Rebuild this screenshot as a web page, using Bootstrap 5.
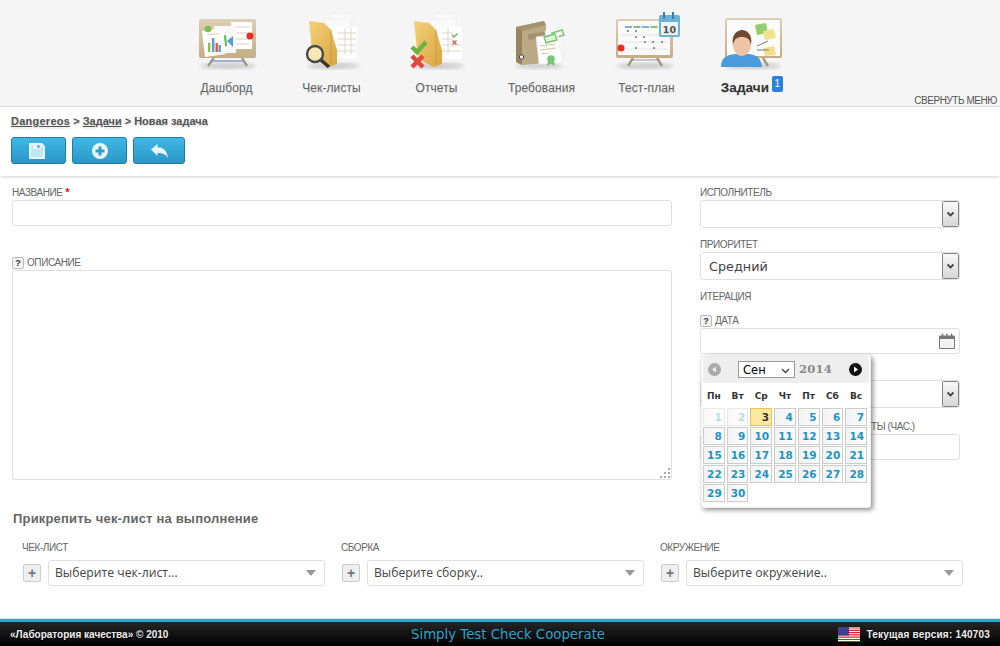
<!DOCTYPE html>
<html lang="ru">
<head>
<meta charset="utf-8">
<title>Новая задача</title>
<link rel="stylesheet" href="https://cdn.jsdelivr.net/npm/bootstrap@5.3.0/dist/css/bootstrap.min.css">
<style>
html,body{height:646px;overflow:hidden}
body{font-family:"Liberation Sans",Arial,sans-serif;font-size:11px;color:#555;background:#fff}
.page-shell{height:646px}
.top-menu{height:107px;background:#f5f5f5;border-bottom:1px solid #e2e2e2;padding-left:174px}
.menu-entry{width:105px;height:106px;text-decoration:none;color:#666;font-size:12px;letter-spacing:.1px;text-shadow:0 1px 1px rgba(0,0,0,.12)}
.menu-entry svg{display:block;width:80px;height:80px}
.menu-caption{margin-top:1px;line-height:14px;white-space:nowrap}
.menu-entry.on{color:#333;font-weight:700;font-size:13.5px}
.menu-entry.on .menu-caption{padding-right:13px}
.count-pill{position:absolute;left:51px;top:-5px;width:11px;height:16px;background:#2a7fe0;color:#fff;border-radius:2px;font-size:10px;font-weight:400;line-height:16px;text-align:center;text-shadow:none}
.collapse-link{position:absolute;right:3px;bottom:-1px;font-size:10px;letter-spacing:-.45px;line-height:12px;color:#555;text-decoration:none}
.sub-head{height:69px;padding:7px 11px 0;box-shadow:0 1px 3px rgba(0,0,0,.18);position:relative}
.crumbs{font-size:11px;font-weight:700;line-height:14px;color:#555;text-shadow:0 1px 2px rgba(0,0,0,.2)}
.crumbs a{color:#555}
.crumbs a.wide-link{letter-spacing:.25px}
.tool-row{margin-top:9px;gap:6px}
.tool-btn{height:27px;width:55px;padding:0;background:linear-gradient(#3fb8e6,#2997c6);border:1px solid #1e7da3;border-radius:3px}
.tool-btn.narrow{width:52px}
.tool-btn:hover{background:linear-gradient(#3fb8e6,#2997c6);border-color:#1e7da3}
.tool-btn svg{display:block;margin:auto}
.tool-btn svg.floppy-glyph{margin-left:17px}
.form-area{padding:10px 0 0 12px}
.col-left{width:660px}
.col-right{width:260px;margin-left:28px}
.fld-label{display:flex;align-items:center;font-size:10px;letter-spacing:-.42px;line-height:14px;color:#666;text-transform:uppercase;margin-bottom:0;white-space:nowrap}
.req-mark{color:#e00;margin-left:3px;font-weight:700}
.help-mark{width:12px;height:12px;border:1px solid #bbb;border-radius:2px;background:#f3f3f3;color:#333;font-size:9px;font-weight:700;line-height:10px;text-align:center;margin-right:3px;flex:none;letter-spacing:0}
.txt-field{display:block;width:100%;height:26px;border:1px solid #e0e0e0;border-radius:3px;background:#fff;padding:0 8px;outline:0}
.txt-area{height:210px;border-radius:2px;resize:none}
.grip-box{position:relative}
.grip-box svg{position:absolute;right:1px;bottom:1px}
.gap-30{margin-top:30px}
.gap-10{margin-top:10px}
.gap-12{margin-top:12px}
.label-tail{padding-left:171px}
.native-box{display:block;width:100%;height:28px;border:1px solid #e0e0e0;border-radius:3px;padding:2px 18px 0 8px;font-family:"DejaVu Sans",sans-serif;font-size:12.8px;color:#444;appearance:none;outline:0;background:#fff url("data:image/svg+xml,%3Csvg xmlns='http://www.w3.org/2000/svg' width='17' height='26'%3E%3ClinearGradient id='g' x2='0' y2='1'%3E%3Cstop stop-color='%23fafafa'/%3E%3Cstop offset='1' stop-color='%23d6d6d6'/%3E%3C/linearGradient%3E%3Crect x='.5' y='.5' width='16' height='25' rx='1' fill='url(%23g)' stroke='%23858585'/%3E%3Cpath d='M5.5 11.5l3 3 3-3' fill='none' stroke='%23444' stroke-width='1.8'/%3E%3C/svg%3E") no-repeat right 0 center}
.date-box{position:relative}
.date-box .txt-field{padding-right:26px}
.cal-glyph{position:absolute;right:5px;top:5px}
.cal-pop{position:absolute;left:1px;top:27px;width:170px;height:153px;background:#fff;border-radius:3px;box-shadow:2px 2px 5px rgba(0,0,0,.45);z-index:5;padding:0 1px 1px;border:1px solid #eee}
.cal-head{height:27px;background:#eee;border-radius:3px;padding:0 7px 0 5px;justify-content:space-between}
.cal-nav{width:13px;height:13px;border-radius:50%;position:relative;flex:none}
.cal-nav.prev{background:#aaa}
.cal-nav.next{background:#111}
.cal-nav svg{position:absolute;left:0;top:0}
.cal-mid{gap:4px}
.cal-month{width:57px;height:17px;border:1px solid #999;background:#fff url("data:image/svg+xml,%3Csvg xmlns='http://www.w3.org/2000/svg' width='9' height='6'%3E%3Cpath d='M1 1l3.5 3.5L8 1' fill='none' stroke='%23444' stroke-width='1.4'/%3E%3C/svg%3E") no-repeat right 4px bottom 3px;appearance:none;font-family:"DejaVu Sans",sans-serif;font-size:11.5px;padding:1px 0 0 4px;color:#000;border-radius:0;outline:0;line-height:14px}
.cal-year{font-family:"DejaVu Serif",serif;font-weight:700;font-size:11.5px;color:#888;letter-spacing:.2px}
.cal-grid{border-collapse:separate;border-spacing:2px 1.4px;margin:6px 0 0 -2px;font-family:"DejaVu Sans",sans-serif;font-weight:700;font-size:10.5px;table-layout:fixed;width:168px}
.cal-grid th{font-size:9px;color:#333;text-align:center;height:17px;padding:0 0 3px;font-weight:700}
.cal-grid td{height:18px;border:1px solid #ccc;text-align:right;padding:0 2px;color:#1c94c4;line-height:14px;background:linear-gradient(100deg,#f2f2f2,#fdfdfd)}
.cal-grid td.muted{color:#b5dcec;border-color:#e8e8e8;background:linear-gradient(100deg,#f8f8f8,#fff)}
.cal-grid td.today{background:#fde89f;border-color:#f0c14b;color:#333}
.cal-grid td.blank{border:0;background:none}
.attach-title{font-size:13px;font-weight:700;line-height:16px;color:#666;margin:31px 0 0 13px;letter-spacing:.18px}
.attach-row{margin:14px 0 0 23px}
.attach-col{width:319px}
.attach-col .fld-label{margin:0 0 5px -1px}
.attach-line{gap:7px}
.plus-btn{width:18px;height:18px;padding:0;border:1px solid #ccc;border-radius:2px;background:#efefef;color:#777;font-size:14px;font-weight:700;line-height:14px;flex:none}
.pick-box{width:277px;height:26px;flex:none;border:1px solid #e0e0e0;border-radius:3px;padding:1px 22px 0 6px;font-family:"Open Sans",sans-serif;font-size:12.2px;color:#444;appearance:none;outline:0;background:#fff url("data:image/svg+xml,%3Csvg xmlns='http://www.w3.org/2000/svg' width='10' height='6'%3E%3Cpath d='M0 0h10L5 6z' fill='%23999'/%3E%3C/svg%3E") no-repeat right 8px center}
.foot-bar{margin-top:auto;height:27px;border-top:3px solid #2ea6d0;outline:1px solid #ddd;background:linear-gradient(#262626,#000);color:#eee;font-size:10px;font-weight:700;padding:1px 10px 0;position:relative;text-shadow:0 1px 1px #000}
.foot-mid{position:absolute;left:411px;top:4px;font-family:"DejaVu Sans",sans-serif;font-size:13.3px;font-weight:400;color:#2ea6d0;line-height:18px;white-space:nowrap}
.foot-right{gap:6px;letter-spacing:.2px}
.flag-svg{display:block}
</style>
</head>
<body>
<div class="page-shell d-flex flex-column">

<nav class="top-menu d-flex position-relative">
  <a class="menu-entry d-flex flex-column align-items-center" href="#">
    <svg viewBox="187 0 80 80">
      <defs>
        <linearGradient id="tan" x2="0" y2="1"><stop stop-color="#dccfb4"/><stop offset="1" stop-color="#c4ad85"/></linearGradient>
        <linearGradient id="gold" x1="0" x2="1" y1="0" y2="1"><stop stop-color="#f4d27a"/><stop offset="1" stop-color="#d9a440"/></linearGradient>
        <filter id="soft"><feGaussianBlur stdDeviation="2"/></filter>
      </defs>
      <ellipse cx="228" cy="66" rx="28" ry="3" fill="#000" opacity=".18" filter="url(#soft)"/>
      <path d="M214 58l-6 8M242 58l5 8" stroke="#a8987a" stroke-width="2.400"/>
      <path d="M210 61h35" stroke="#7f9cb8" stroke-width="1.500"/>
      <rect x="199" y="19" width="57" height="39" rx="2" fill="url(#tan)"/>
      <rect x="231" y="22" width="21" height="27" fill="#fff"/>
      <path d="M235 27h14M235 33h14M235 39h14M235 44h14" stroke="#d8cdb6"/>
      <rect x="214" y="26" width="22" height="27" fill="#f8f8f8"/>
      <path d="M222 36l4-1 1 11-5 1z" fill="#5cb85c"/><path d="M227 41l6-5v11z" fill="#4a9fdc"/>
      <path d="M202 31l21-3 3 26-21 3z" fill="#fff"/>
      <path d="M207 35l12-1.500" stroke="#d8cdb6"/>
      <rect x="208" y="43" width="2.400" height="9" fill="#8bc34a"/><rect x="212" y="38" width="2.400" height="14" fill="#5e9bd0"/><rect x="215.500" y="43" width="2.400" height="9" fill="#e0584a"/><rect x="218.500" y="45" width="2.400" height="7" fill="#5e9bd0"/>
      <circle cx="208" cy="29" r="3.300" fill="#79bf4a"/>
      <circle cx="250" cy="36" r="3.500" fill="#ee2a24"/>
    </svg>
    <span class="menu-caption">Дашборд</span>
  </a>
  <a class="menu-entry d-flex flex-column align-items-center" href="#">
    <svg viewBox="292 0 80 80">
      <ellipse cx="333" cy="66" rx="26" ry="3" fill="#000" opacity=".18" filter="url(#soft)"/>
      <rect x="331" y="13" width="21" height="20" fill="#f9f9f9" stroke="#eee" stroke-width=".5"/>
      <path d="M347 19v6" stroke="#999"/>
      <rect x="325" y="19" width="26" height="40" fill="#fafafa" stroke="#e8e8e8" stroke-width=".5"/>
      <rect x="331" y="27" width="26" height="32" fill="#fff"/>
      <path d="M337 33h19M337 39h19M337 45h19M337 51h19M345 28v26M351 28v26" stroke="#d8cdb6" stroke-width=".8"/>
      <path d="M309 21l15 2 7 7 6 20v14l-8 3-16-8z" fill="url(#gold)"/>
      <path d="M331 30v34" stroke="#b68b34" opacity=".6"/>
      <path d="M321 60l8 7" stroke="#333" stroke-width="3.500"/>
      <circle cx="315" cy="54" r="8" fill="#f6e7b4" stroke="#4a4a4a" stroke-width="2.400"/>
    </svg>
    <span class="menu-caption">Чек-листы</span>
  </a>
  <a class="menu-entry d-flex flex-column align-items-center" href="#">
    <svg viewBox="396 0 80 80">
      <ellipse cx="437" cy="66" rx="26" ry="3" fill="#000" opacity=".18" filter="url(#soft)"/>
      <rect x="434" y="13" width="21" height="20" fill="#f9f9f9" stroke="#eee" stroke-width=".5"/>
      <path d="M450 19v6" stroke="#999"/>
      <rect x="429" y="19" width="26" height="40" fill="#fafafa" stroke="#e8e8e8" stroke-width=".5"/>
      <rect x="435" y="27" width="26" height="32" fill="#fff"/>
      <path d="M441 33h11M441 39h11M441 45h19M441 51h19M447 28v26" stroke="#d8cdb6" stroke-width=".8"/>
      <path d="M451 35l2 2 3.500-3.500" fill="none" stroke="#6ab04c" stroke-width="1.300"/>
      <path d="M451.500 40.500l4 4m0-4l-4 4" stroke="#d9534f" stroke-width="1.200"/>
      <path d="M413 21l15 2 7 7 6 20v14l-8 3-16-8z" fill="url(#gold)"/>
      <path d="M435 30v34" stroke="#b68b34" opacity=".6"/>
      <path d="M411 47l5 5 9-10" fill="none" stroke="#6cb33f" stroke-width="4.500"/>
      <path d="M411 56l11 11m0-11l-11 11" stroke="#e0483e" stroke-width="4.500"/>
    </svg>
    <span class="menu-caption">Отчеты</span>
  </a>
  <a class="menu-entry d-flex flex-column align-items-center" href="#">
    <svg viewBox="501 0 80 80">
      <ellipse cx="538" cy="66" rx="24" ry="3" fill="#000" opacity=".16" filter="url(#soft)"/>
      <path d="M515 27l28-6 2 4v38l-24 2-6-3z" fill="#bba986"/>
      <path d="M515 27l28-6 2 4-24 6z" fill="#a5926f"/>
      <path d="M515 27l6 4v34l-6-3z" fill="#97845f"/>
      <rect x="527" y="33" width="17" height="6" fill="#a5926f" transform="rotate(-8 535 36)"/>
      <circle cx="520.500" cy="57" r="2.200" fill="#f3f3f3" stroke="#444"/>
      <path d="M544 31l17-4 2 29-16 3z" fill="#f6f6f6" stroke="#e4e4e4" stroke-width=".5"/>
      <path d="M551 33l10-3 2 5-10 3z" fill="none" stroke="#7cc47c" stroke-width="1.500"/>
      <path d="M535 37l22-3 4 29-23 1z" fill="#fff" stroke="#e4e4e4" stroke-width=".5"/>
      <path d="M543 37l11-3 2 6-11 3z" fill="#dff0d8" stroke="#6ec06e" stroke-width="1.300"/>
      <path d="M539 46l15-2M539 50l16-2M540 54l8-1" stroke="#d6c498"/>
      <circle cx="550" cy="59" r="3.800" fill="#7cc47c"/><path d="M547 61l-1 5 4-2 4 2-1-5" fill="#7cc47c"/>
    </svg>
    <span class="menu-caption">Требования</span>
  </a>
  <a class="menu-entry d-flex flex-column align-items-center" href="#">
    <svg viewBox="607 0 80 80">
      <ellipse cx="645" cy="66" rx="28" ry="3" fill="#000" opacity=".18" filter="url(#soft)"/>
      <path d="M633 58l-5 8M657 58l5 8" stroke="#a8987a" stroke-width="2.400"/>
      <path d="M630 60h30" stroke="#999"/>
      <rect x="616" y="19" width="57" height="39" rx="2" fill="url(#tan)"/>
      <rect x="618" y="21" width="52" height="34" fill="#fafafa"/>
      <path d="M625 27h7M642 27h7" stroke="#7fb5d8" stroke-width="2"/><path d="M633.500 27h7M650.500 27h7" stroke="#7fc27f" stroke-width="2"/>
      <path d="M622 35h46M622 42h46M622 49h46" stroke="#ddd" stroke-width=".8"/>
      <g fill="#666"><circle cx="628" cy="31" r=".9"/><circle cx="636" cy="31" r=".9"/><circle cx="636" cy="37" r=".9"/><circle cx="644" cy="37" r=".9"/><circle cx="645" cy="42" r=".9"/><circle cx="653" cy="42" r=".9"/><circle cx="662" cy="42" r=".9"/><circle cx="636" cy="48" r=".9"/><circle cx="654" cy="48" r=".9"/></g>
      <circle cx="621" cy="48" r="3.500" fill="#ee2a24"/>
      <rect x="659" y="15" width="21" height="22" rx="2" fill="#6cb2d8"/>
      <rect x="661" y="22" width="17" height="13" fill="#eef3f6"/>
      <path d="M664 12v7M673 12v7" stroke="#3f7fa5" stroke-width="2"/>
      <text x="669.500" y="33" text-anchor="middle" font-family="DejaVu Sans" font-weight="700" font-size="9.500" fill="#555">10</text>
    </svg>
    <span class="menu-caption">Тест-план</span>
  </a>
  <a class="menu-entry on d-flex flex-column align-items-center" href="#">
    <svg viewBox="711 0 80 80">
      <ellipse cx="752" cy="66" rx="28" ry="3" fill="#000" opacity=".18" filter="url(#soft)"/>
      <path d="M762 58l5 8" stroke="#a8987a" stroke-width="2.400"/>
      <rect x="724" y="18" width="57" height="40" rx="2" fill="url(#tan)"/>
      <rect x="726" y="20" width="53" height="36" fill="#fbfbfb"/>
      <path d="M754 25l11-2 2 10-11 2z" fill="#8fcf6f"/>
      <path d="M762 31l11-2 2 9-11 2z" fill="#f3e08a"/>
      <path d="M762 48l11-2 2 9-11 1z" fill="#f3e08a"/>
      <path d="M767 41l-11 5M768 50l-12 0" stroke="#777" fill="none"/>
      <path d="M720 67c0-10 6-12 14-13h14c8 1 12 4 13 13z" fill="#4a9bdc"/>
      <ellipse cx="741" cy="45" rx="9" ry="11" fill="#eec4a4"/>
      <path d="M732 45c-2-10 4-15 9-15s11 5 9 15c-1-6-4-8-9-8s-8 2-9 8z" fill="#6f4a2c"/>
    </svg>
    <span class="menu-caption position-relative">Задачи<span class="count-pill">1</span></span>
  </a>
  <a class="collapse-link text-uppercase" href="#">Свернуть меню</a>
</nav>

<div class="sub-head">
  <div class="crumbs"><a class="wide-link" href="#">Dangereos</a> &gt; <a href="#">Задачи</a> &gt; Новая задача</div>
  <div class="tool-row d-flex">
    <button class="btn tool-btn" type="button" aria-label="Сохранить"><svg class="floppy-glyph" width="16" height="16" viewBox="0 0 16 16"><path d="M1 1h11.500L15 3.500V15H1z" fill="#bfe6f5" stroke="#e8f6fb" stroke-width="2"/><rect x="4" y="1" width="8" height="5" fill="#e8f6fb"/><rect x="8.500" y="2" width="2" height="3" fill="#35a9d6"/></svg></button>
    <button class="btn tool-btn" type="button" aria-label="Добавить"><svg width="16" height="16" viewBox="0 0 16 16"><circle cx="8" cy="8" r="8" fill="#e8f6fb"/><path d="M8 3.500v9M3.500 8h9" stroke="#2f9fcd" stroke-width="3"/></svg></button>
    <button class="btn tool-btn narrow" type="button" aria-label="Назад"><svg width="17" height="14" viewBox="0 0 17 14"><path d="M0 5.500L6.500 0v3.300C12 3.300 16 6.500 17 14c-2-3.500-5-5-10.500-5v3z" fill="#e8f6fb"/></svg></button>
  </div>
</div>

<main class="form-area">
  <div class="d-flex">
    <div class="col-left">
      <label class="fld-label">Название<span class="req-mark">*</span></label>
      <input class="txt-field" type="text">
      <label class="fld-label gap-30"><span class="help-mark">?</span>Описание</label>
      <div class="grip-box">
        <textarea class="txt-field txt-area"></textarea>
        <svg width="12" height="12" viewBox="0 0 12 12"><g fill="#aaa"><rect x="9" y="1" width="2" height="2"/><rect x="5" y="5" width="2" height="2"/><rect x="9" y="5" width="2" height="2"/><rect x="1" y="9" width="2" height="2"/><rect x="5" y="9" width="2" height="2"/><rect x="9" y="9" width="2" height="2"/></g></svg>
      </div>
    </div>
    <div class="col-right">
      <label class="fld-label">Исполнитель</label>
      <select class="native-box"><option></option></select>
      <label class="fld-label gap-10">Приоритет</label>
      <select class="native-box"><option>Средний</option></select>
      <label class="fld-label gap-10">Итерация</label>
      <label class="fld-label gap-10"><span class="help-mark">?</span>Дата</label>
      <div class="date-box">
        <input class="txt-field" type="text">
        <svg class="cal-glyph" width="16" height="16" viewBox="0 0 16 16"><path d="M0.500 3h15v12.500H.5z" fill="#f2f2f2" stroke="#777"/><rect x="0" y="3" width="16" height="3" fill="#777"/><path d="M3.500 0.500v4M8 .5v4M12.500 .5v4" stroke="#777" stroke-width="1.400"/></svg>
        <div class="cal-pop">
          <div class="cal-head d-flex align-items-center">
            <span class="cal-nav prev"><svg width="13" height="13" viewBox="0 0 13 13"><path d="M8 3.500v6L4 6.500z" fill="#eee"/></svg></span>
            <span class="cal-mid d-flex align-items-center">
              <select class="cal-month"><option>Сен</option></select>
              <span class="cal-year">2014</span>
            </span>
            <span class="cal-nav next"><svg width="13" height="13" viewBox="0 0 13 13"><path d="M5 3.500v6l4-3z" fill="#fff"/></svg></span>
          </div>
          <table class="cal-grid">
            <thead><tr><th>Пн</th><th>Вт</th><th>Ср</th><th>Чт</th><th>Пт</th><th>Сб</th><th>Вс</th></tr></thead>
            <tbody>
              <tr><td class="muted">1</td><td class="muted">2</td><td class="today">3</td><td>4</td><td>5</td><td>6</td><td>7</td></tr>
              <tr><td>8</td><td>9</td><td>10</td><td>11</td><td>12</td><td>13</td><td>14</td></tr>
              <tr><td>15</td><td>16</td><td>17</td><td>18</td><td>19</td><td>20</td><td>21</td></tr>
              <tr><td>22</td><td>23</td><td>24</td><td>25</td><td>26</td><td>27</td><td>28</td></tr>
              <tr><td>29</td><td>30</td><td class="blank"></td><td class="blank"></td><td class="blank"></td><td class="blank"></td><td class="blank"></td></tr>
            </tbody>
          </table>
        </div>
      </div>
      <div class="fld-label gap-12">&nbsp;</div>
      <select class="native-box" aria-label="Компонент"><option></option></select>
      <label class="fld-label gap-12 label-tail">ты (час.)</label>
      <input class="txt-field" type="text">
    </div>
  </div>
</main>

<section class="position-relative">
  <div class="attach-title">Прикрепить чек-лист на выполнение</div>
  <div class="attach-row d-flex">
    <div class="attach-col">
      <label class="fld-label">Чек-лист</label>
      <div class="attach-line d-flex align-items-center"><button class="plus-btn" type="button">+</button><select class="pick-box"><option>Выберите чек-лист...</option></select></div>
    </div>
    <div class="attach-col">
      <label class="fld-label">Сборка</label>
      <div class="attach-line d-flex align-items-center"><button class="plus-btn" type="button">+</button><select class="pick-box"><option>Выберите сборку..</option></select></div>
    </div>
    <div class="attach-col">
      <label class="fld-label">Окружение</label>
      <div class="attach-line d-flex align-items-center"><button class="plus-btn" type="button">+</button><select class="pick-box"><option>Выберите окружение..</option></select></div>
    </div>
  </div>
</section>

<footer class="foot-bar d-flex align-items-center justify-content-between">
  <span>«Лаборатория качества» © 2010</span>
  <span class="foot-mid">Simply Test Check Cooperate</span>
  <span class="foot-right d-flex align-items-center">
    <svg class="flag-svg" width="22" height="15" viewBox="0 0 22 15"><rect width="22" height="15" fill="#fff"/><path d="M0 1h22M0 3.300h22M0 5.600h22M0 7.900h22M0 10.200h22M0 12.500h22M0 14.500h22" stroke="#d8222a" stroke-width="1.200"/><rect width="11" height="8.500" fill="#3f3f8f"/></svg>
    <span>Текущая версия: 140703</span>
  </span>
</footer>
</div>
<script src="https://cdn.jsdelivr.net/npm/bootstrap@5.3.0/dist/js/bootstrap.bundle.min.js"></script>
</body>
</html>
